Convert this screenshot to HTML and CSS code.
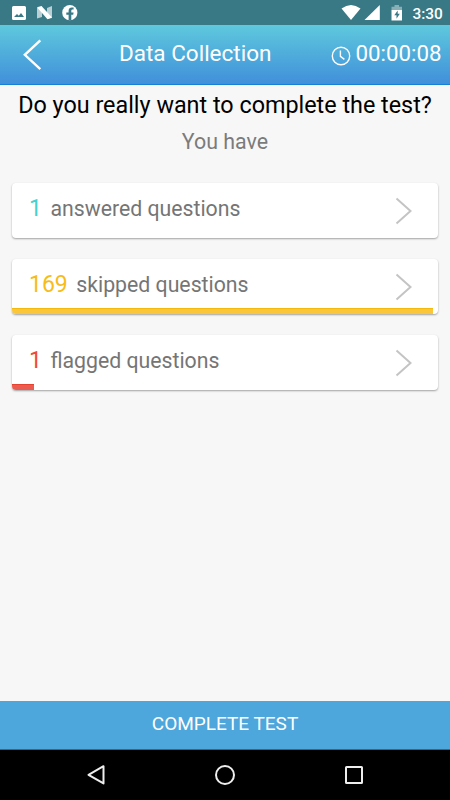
FILE: index.html
```html
<!DOCTYPE html>
<html lang="en">
<head>
<meta charset="utf-8">
<title>Data Collection</title>
<link rel="stylesheet" href="styles.css">
</head>
<body>
<div class="status">
  <svg class="status-left" width="90" height="25" viewBox="0 0 90 25">
    <path fill="#fff" fill-rule="evenodd" d="M13.500 6h11q1.500 0 1.500 1.500v11q0 1.500-1.500 1.500h-11q-1.500 0-1.500-1.500v-11q0-1.500 1.500-1.500zM14 17h10l-3-4-2.200 2.700-1.800-1.700z"/>
    <path fill="#fff" opacity=".65" d="M37 8l5-1.500V17l-5 1.500zM47 8l5-2v12l-5 1z"/>
    <path fill="#fff" d="M37 7.200l4.500-1.200L52 17.500l-4.500 1.800z"/>
    <circle cx="69.800" cy="12.700" r="7.600" fill="#fff"/>
    <path fill="#397985" d="M68.600 20.300v-5.600h-2.300v-2.300h2.300v-1.600c0-2.300 1.300-3.400 3.300-3.400l1.700.2v2h-1c-1 0-1.300.6-1.300 1.300v1.500h2.300l-.4 2.300h-1.900v5.600z"/>
  </svg>
  <svg class="status-right" width="70" height="25" viewBox="340 0 70 25">
    <path fill="#fff" d="M341.500 8.500q9.500-7 19 0l-9.500 11.500z"/>
    <path fill="#fff" d="M379.800 5v15h-15.300z"/>
    <path fill="#fff" opacity=".4" d="M391.500 10V6.700h3V5h4.500v1.700h3V10z"/>
    <path fill="#fff" d="M391.500 10h10.500v10.500h-10.500z"/>
    <path fill="#397985" d="M397.700 10.500l-3.400 4.800h2.200v3.500l3.300-5h-2.100z"/>
  </svg>
  <span class="clock">3:30</span>
</div>
<header class="header">
  <svg class="back" width="22" height="34" viewBox="0 0 22 34"><path d="M18.300 2.300L2.800 16.800l15.500 14.400"/></svg>
  <h1 class="title">Data Collection</h1>
  <svg class="timer-icon" width="20" height="20" viewBox="0 0 20 20"><circle cx="10" cy="10" r="8.700"/><path d="M9.400 4.600v5.800l4 3"/></svg>
  <span class="timer">00:00:08</span>
</header>
<main class="main">
  <h2 class="question">Do you really want to complete the test?</h2>
  <p class="have">You have</p>
  <div class="cards">
    <div class="card answered">
      <span class="num">1</span><span class="label">answered questions</span>
      <svg class="chevron" width="18" height="28" viewBox="0 0 18 28"><path d="M1.500 1.500L15.500 14 1.500 26.500"/></svg>
    </div>
    <div class="card skipped">
      <span class="num">169</span><span class="label">skipped questions</span>
      <svg class="chevron" width="18" height="28" viewBox="0 0 18 28"><path d="M1.500 1.500L15.500 14 1.500 26.500"/></svg>
      <div class="bar" style="width:421px"></div>
    </div>
    <div class="card flagged">
      <span class="num">1</span><span class="label">flagged questions</span>
      <svg class="chevron" width="18" height="28" viewBox="0 0 18 28"><path d="M1.500 1.500L15.500 14 1.500 26.500"/></svg>
      <div class="bar" style="width:22px"></div>
    </div>
  </div>
</main>
<button class="complete">COMPLETE TEST</button>
<nav class="nav">
  <svg width="20" height="22" viewBox="0 0 20 22"><path d="M17.500 2.200v17.200L2.500 10.800z"/></svg>
  <svg width="22" height="22" viewBox="0 0 22 22"><circle cx="11" cy="11" r="9"/></svg>
  <svg width="20" height="20" viewBox="0 0 20 20"><rect x="2" y="2" width="16" height="16" rx=".5"/></svg>
</nav>
</body>
</html>
```

FILE: styles.css
```css
* { box-sizing: border-box; }
body {
  margin: 0;
  width: 450px;
  height: 800px;
  display: flex;
  flex-direction: column;
  overflow: hidden;
  background: #f7f7f7;
  font-family: Roboto, sans-serif;
}
svg { display: block; flex: none; }
.status {
  height: 25px;
  flex: none;
  display: flex;
  background: #397985;
  color: #fff;
}
.status-right { margin-left: 250px; }
.clock {
  margin-left: 2.500px;
  font-size: 15.400px;
  font-weight: 500;
  line-height: 28px;
  white-space: nowrap;
}
.header {
  height: 60px;
  flex: none;
  display: flex;
  align-items: flex-start;
  background: linear-gradient(#5ec9dd, #418fda);
  border-bottom: 1px solid #1580d8;
  color: #fff;
  white-space: nowrap;
}
.back { margin: 13px 0 0 22px; }
.back path { fill: none; stroke: #fff; stroke-width: 2.400; }
.title {
  width: 152px;
  margin: 0 0 0 75px;
  font-size: 22.500px;
  font-weight: 400;
  line-height: 57px;
}
.timer-icon { margin: 20.500px 0 0 59.500px; }
.timer-icon * { fill: none; stroke: #fff; stroke-width: 1.400; }
.timer {
  margin-left: 5px;
  font-size: 22.300px;
  line-height: 57px;
}
.main { flex: 1; }
.question {
  margin: 0;
  padding-top: 5px;
  font-size: 23.350px;
  font-weight: 400;
  line-height: 31px;
  text-align: center;
  color: #000;
  white-space: nowrap;
}
.have {
  margin: 5px 0 0;
  font-size: 21.400px;
  line-height: 31px;
  text-align: center;
  color: #7b7b7b;
}
.cards {
  display: grid;
  gap: 21px;
  padding: 26px 12px 0;
}
.card {
  position: relative;
  display: flex;
  align-items: flex-start;
  height: 55px;
  padding-left: 17px;
  overflow: hidden;
  border-radius: 4px;
  background: #fff;
  box-shadow: 0 1px 2px rgba(0, 0, 0, .35);
  line-height: 51px;
  white-space: nowrap;
}
.num { font-size: 23px; font-weight: 400; }
.label { margin-left: 8.500px; font-size: 21.250px; color: #757575; }
.chevron { margin: 14px 25px 0 auto; }
.chevron path { fill: none; stroke: #c4c4c4; stroke-width: 2; }
.answered .num { color: #45d2cf; }
.skipped .num { color: #f8bc18; }
.flagged .num { color: #f04a36; }
.bar { position: absolute; left: 0; bottom: 0; height: 6px; }
.skipped .bar { background: #f9c63c; border-top: 1px solid #f5b90d; }
.flagged .bar { background: #ec5b4f; border-top: 1px solid #e5432f; }
.complete {
  height: 49px;
  flex: none;
  margin: 0;
  padding: 0 0 2px;
  border: 0;
  border-bottom: 1px solid #276b9b;
  background: #4da6dc;
  color: #fff;
  font: 400 19px/44px Roboto, sans-serif;
}
.nav {
  height: 50px;
  flex: none;
  display: grid;
  grid-template-columns: repeat(3, 129px);
  justify-content: center;
  justify-items: center;
  align-items: center;
  background: #000;
}
.nav svg * { fill: none; stroke: #eee; stroke-width: 2; stroke-linejoin: round; }
```
